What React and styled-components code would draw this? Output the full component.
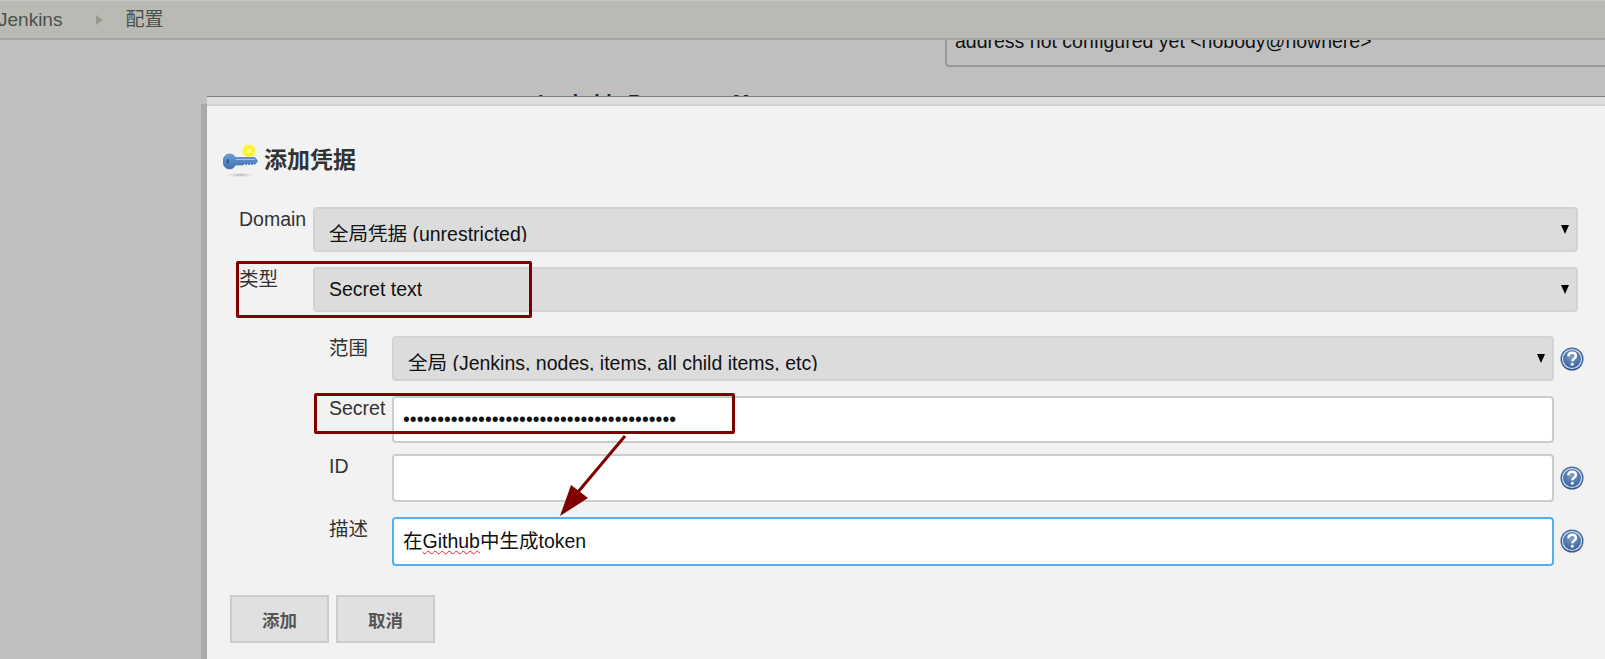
import React from "react";
import styled, { createGlobalStyle } from "styled-components";

const Global = createGlobalStyle`
  html, body { margin: 0; padding: 0; height: 100%; overflow: hidden; background: #bfbfbf; }
  * { box-sizing: border-box; }
  body { font-family: "Liberation Sans", "Noto Sans CJK SC", sans-serif; }
`;

const Page = styled.div`
  position: relative;
  width: 1605px;
  height: 659px;
  overflow: hidden;
  background: #bfbfbf;
  font-size: 19.5px;
`;

const Header = styled.header`
  position: relative;
  z-index: 1;
  height: 40px;
  display: flex;
  align-items: center;
  margin-left: -2px;
  background: #b8bab3;
  border-top: 1px solid #c6c7c3;
  border-bottom: 2px solid #a6a6a1;
  color: #4c504c;
  font-size: 19px;
`;

const Crumb = styled.span`
  line-height: 37px;
`;

const CrumbArrow = styled.span`
  width: 0;
  height: 0;
  margin: 0 22px 0 34px;
  border-left: 7px solid #98998f;
  border-top: 5px solid transparent;
  border-bottom: 5px solid transparent;
`;

const Behind = styled.main`
  padding-left: 945px;
`;

const AddressBox = styled.div`
  height: 37px;
  margin-top: -10px;
  margin-right: -20px;
  padding: 0 8px;
  border: 2px solid #999;
  border-radius: 4px;
  color: #111;
  line-height: 19px;
`;

const PeekHeading = styled.h2`
  margin: 23px 0 0 -407px;
  color: #222;
  font-size: 19.5px;
  font-weight: 700;
  line-height: 24px;
  white-space: nowrap;
`;

const Dialog = styled.section`
  position: absolute;
  left: 207px;
  top: 96px;
  right: 0;
  bottom: 0;
  background: #f2f2f2;
  box-shadow: -6px 8px 0 #aaaaaa;
`;

const TitleBar = styled.div`
  height: 10px;
  background: #dcdddf;
  border-top: 1px solid #808080;
  border-bottom: 2px solid #d0d0d0;
`;

const Title = styled.h1`
  display: flex;
  align-items: center;
  gap: 5px;
  height: 41px;
  margin: 31px 0 29px 16px;
  color: #333;
  font-size: 23px;
  font-weight: 700;
`;

const Form = styled.div`
  display: flex;
  flex-direction: column;
  padding: 0 27px 0 32px;
`;

const Row = styled.div`
  display: flex;
  margin-bottom: ${(p) => p.$gap ?? 15}px;
`;

const Label = styled.label`
  flex: 0 0 ${(p) => p.$width}px;
  color: #333;
  line-height: 24px;
`;

const Nested = styled.div`
  display: flex;
  flex-direction: column;
  margin: 9px -6px 0 90px;
`;

const Select = styled.div`
  flex: 1;
  display: flex;
  justify-content: space-between;
  height: 45px;
  padding: 0 7px 0 14px;
  background: #dcdcdc;
  border: 2px solid #d3d3d3;
  border-radius: 4px;
  color: #111;
`;

const SelectValue = styled.span`
  display: block;
  height: ${(p) => (p.$clipped ? 19 : 30)}px;
  margin-top: ${(p) => (p.$clipped ? 14 : 9)}px;
  overflow: hidden;
  line-height: 22px;
`;

const Caret = styled.span`
  width: 0;
  height: 0;
  margin-top: 16px;
  border-top: 9px solid #000;
  border-left: 4.500px solid transparent;
  border-right: 4.500px solid transparent;
`;

const Field = styled.div`
  flex: 1;
  height: ${(p) => p.$height}px;
  padding: 0 9px;
  background: #fff;
  border: 2px solid ${(p) => (p.$focused ? "#55aef0" : "#cccccc")};
  border-radius: 4px;
  color: #111;
  line-height: ${(p) => p.$height - 5}px;
  white-space: nowrap;
`;

const Misspelled = styled.span`
  text-decoration: underline wavy #f01c24 1px;
  text-underline-offset: 2px;
`;

const HelpSlot = styled.div`
  flex: 0 0 30px;
  display: flex;
  justify-content: flex-end;
  padding-top: ${(p) => p.$top}px;
`;

const Actions = styled.div`
  display: flex;
  gap: 7px;
  margin: 29px 0 0 23px;
`;

const Button = styled.button`
  width: 99px;
  height: 48px;
  padding: 0;
  background: #e0e0e0;
  border: 2px solid #cccccc;
  color: #555;
  font-family: inherit;
  font-size: 17.5px;
  font-weight: 700;
`;

const Mark = styled.div`
  position: absolute;
  left: ${(p) => p.$x}px;
  top: ${(p) => p.$y}px;
  width: ${(p) => p.$w}px;
  height: ${(p) => p.$h}px;
  border: 3px solid #800000;
  border-radius: 2px;
  z-index: 3;
`;

const ArrowLayer = styled.svg`
  position: absolute;
  left: 0;
  top: 0;
  z-index: 3;
`;

const KeyIcon = () => (
  <svg width="36" height="41" viewBox="0 0 36 41">
    <defs>
      <radialGradient id="glow">
        <stop offset="0" stopColor="#fffbd0" />
        <stop offset="0.55" stopColor="#fff200" />
        <stop offset="1" stopColor="#fff59a" stopOpacity="0.2" />
      </radialGradient>
      <radialGradient id="shade">
        <stop offset="0" stopColor="#b0b0b0" />
        <stop offset="1" stopColor="#e8e8e8" stopOpacity="0" />
      </radialGradient>
      <linearGradient id="steel" x1="0" y1="0" x2="0" y2="1">
        <stop offset="0" stopColor="#6f9fd8" />
        <stop offset="1" stopColor="#3f6fae" />
      </linearGradient>
    </defs>
    <ellipse cx="17" cy="38" rx="16" ry="2.500" fill="url(#shade)" />
    <circle cx="26" cy="14" r="8" fill="url(#glow)" />
    <path
      d="M0 24.500c0-4.300 2.800-7.500 6.500-7.500 2.700 0 4.800 1.300 5.800 3.500H32l2.500 3.500-2.500 3.500-1.500-1-1.500 1.500-1.500-1.500-1.500 1.500-1.500-1.500-1.500 1.500-1.500-1.500-1.500 1.500H12.300C11.300 30.700 9.200 32 6.500 32c-3.700 0-6.500-3.200-6.500-7.500z"
      fill="url(#steel)"
      stroke="#3c6aa8"
      strokeWidth="0.6"
    />
    <ellipse cx="4.800" cy="24.500" rx="1.200" ry="2.400" fill="#2d5a94" />
    <path d="M13 22.500h19" stroke="#9cc0ea" strokeWidth="1" />
  </svg>
);

const HelpIcon = ({ id }) => (
  <svg width="24" height="24" viewBox="0 0 24 24">
    <defs>
      <radialGradient id={id} cx="0.5" cy="0.4" r="0.65">
        <stop offset="0" stopColor="#7f9fc9" />
        <stop offset="1" stopColor="#234d8c" />
      </radialGradient>
    </defs>
    <circle cx="12" cy="12" r="11.500" fill={`url(#${id})`} />
    <circle cx="12" cy="12" r="9.500" fill="none" stroke="#d5e0ee" strokeWidth="1.200" />
    <path
      d="M8.300 9.300C8.500 6.800 10 5.800 12.100 5.800c2.300 0 3.800 1.300 3.800 3.100 0 2.700-3.500 2.700-3.500 5.400"
      fill="none"
      stroke="#fff"
      strokeWidth="2.400"
    />
    <circle cx="12.300" cy="17.300" r="1.500" fill="#fff" />
  </svg>
);

export default function App() {
  return (
    <Page>
      <Global />
      <Header>
        <Crumb>Jenkins</Crumb>
        <CrumbArrow />
        <Crumb>配置</Crumb>
      </Header>
      <Behind>
        <AddressBox>address not configured yet &lt;nobody@nowhere&gt;</AddressBox>
        <PeekHeading>Lockable Resources Manager</PeekHeading>
      </Behind>
      <Dialog>
        <TitleBar />
        <Title>
          <KeyIcon />
          添加凭据
        </Title>
        <Form>
          <Row>
            <Label $width={74}>Domain</Label>
            <Select>
              <SelectValue $clipped>全局凭据 (unrestricted)</SelectValue>
              <Caret />
            </Select>
          </Row>
          <Row>
            <Label $width={74}>类型</Label>
            <Select>
              <SelectValue>Secret text</SelectValue>
              <Caret />
            </Select>
          </Row>
          <Nested>
            <Row>
              <Label $width={63}>范围</Label>
              <Select>
                <SelectValue $clipped>全局 (Jenkins, nodes, items, all child items, etc)</SelectValue>
                <Caret />
              </Select>
              <HelpSlot $top={11}>
                <HelpIcon id="help-a" />
              </HelpSlot>
            </Row>
            <Row $gap={11}>
              <Label $width={63}>Secret</Label>
              <Field $height={47}>{"•".repeat(40)}</Field>
              <HelpSlot $top={0} />
            </Row>
            <Row>
              <Label $width={63}>ID</Label>
              <Field $height={48} />
              <HelpSlot $top={12}>
                <HelpIcon id="help-b" />
              </HelpSlot>
            </Row>
            <Row $gap={0}>
              <Label $width={63}>描述</Label>
              <Field $height={49} $focused>
                在<Misspelled>Github</Misspelled>中生成token
              </Field>
              <HelpSlot $top={12}>
                <HelpIcon id="help-c" />
              </HelpSlot>
            </Row>
          </Nested>
        </Form>
        <Actions>
          <Button>添加</Button>
          <Button>取消</Button>
        </Actions>
      </Dialog>
      <Mark $x={236} $y={261} $w={296} $h={57} />
      <Mark $x={314} $y={393} $w={421} $h={41} />
      <ArrowLayer width="1605" height="659" viewBox="0 0 1605 659">
        <line x1="625" y1="436" x2="578" y2="492" stroke="#800000" strokeWidth="3" />
        <polygon points="560,516 571,485 588,498" fill="#800000" />
      </ArrowLayer>
    </Page>
  );
}
